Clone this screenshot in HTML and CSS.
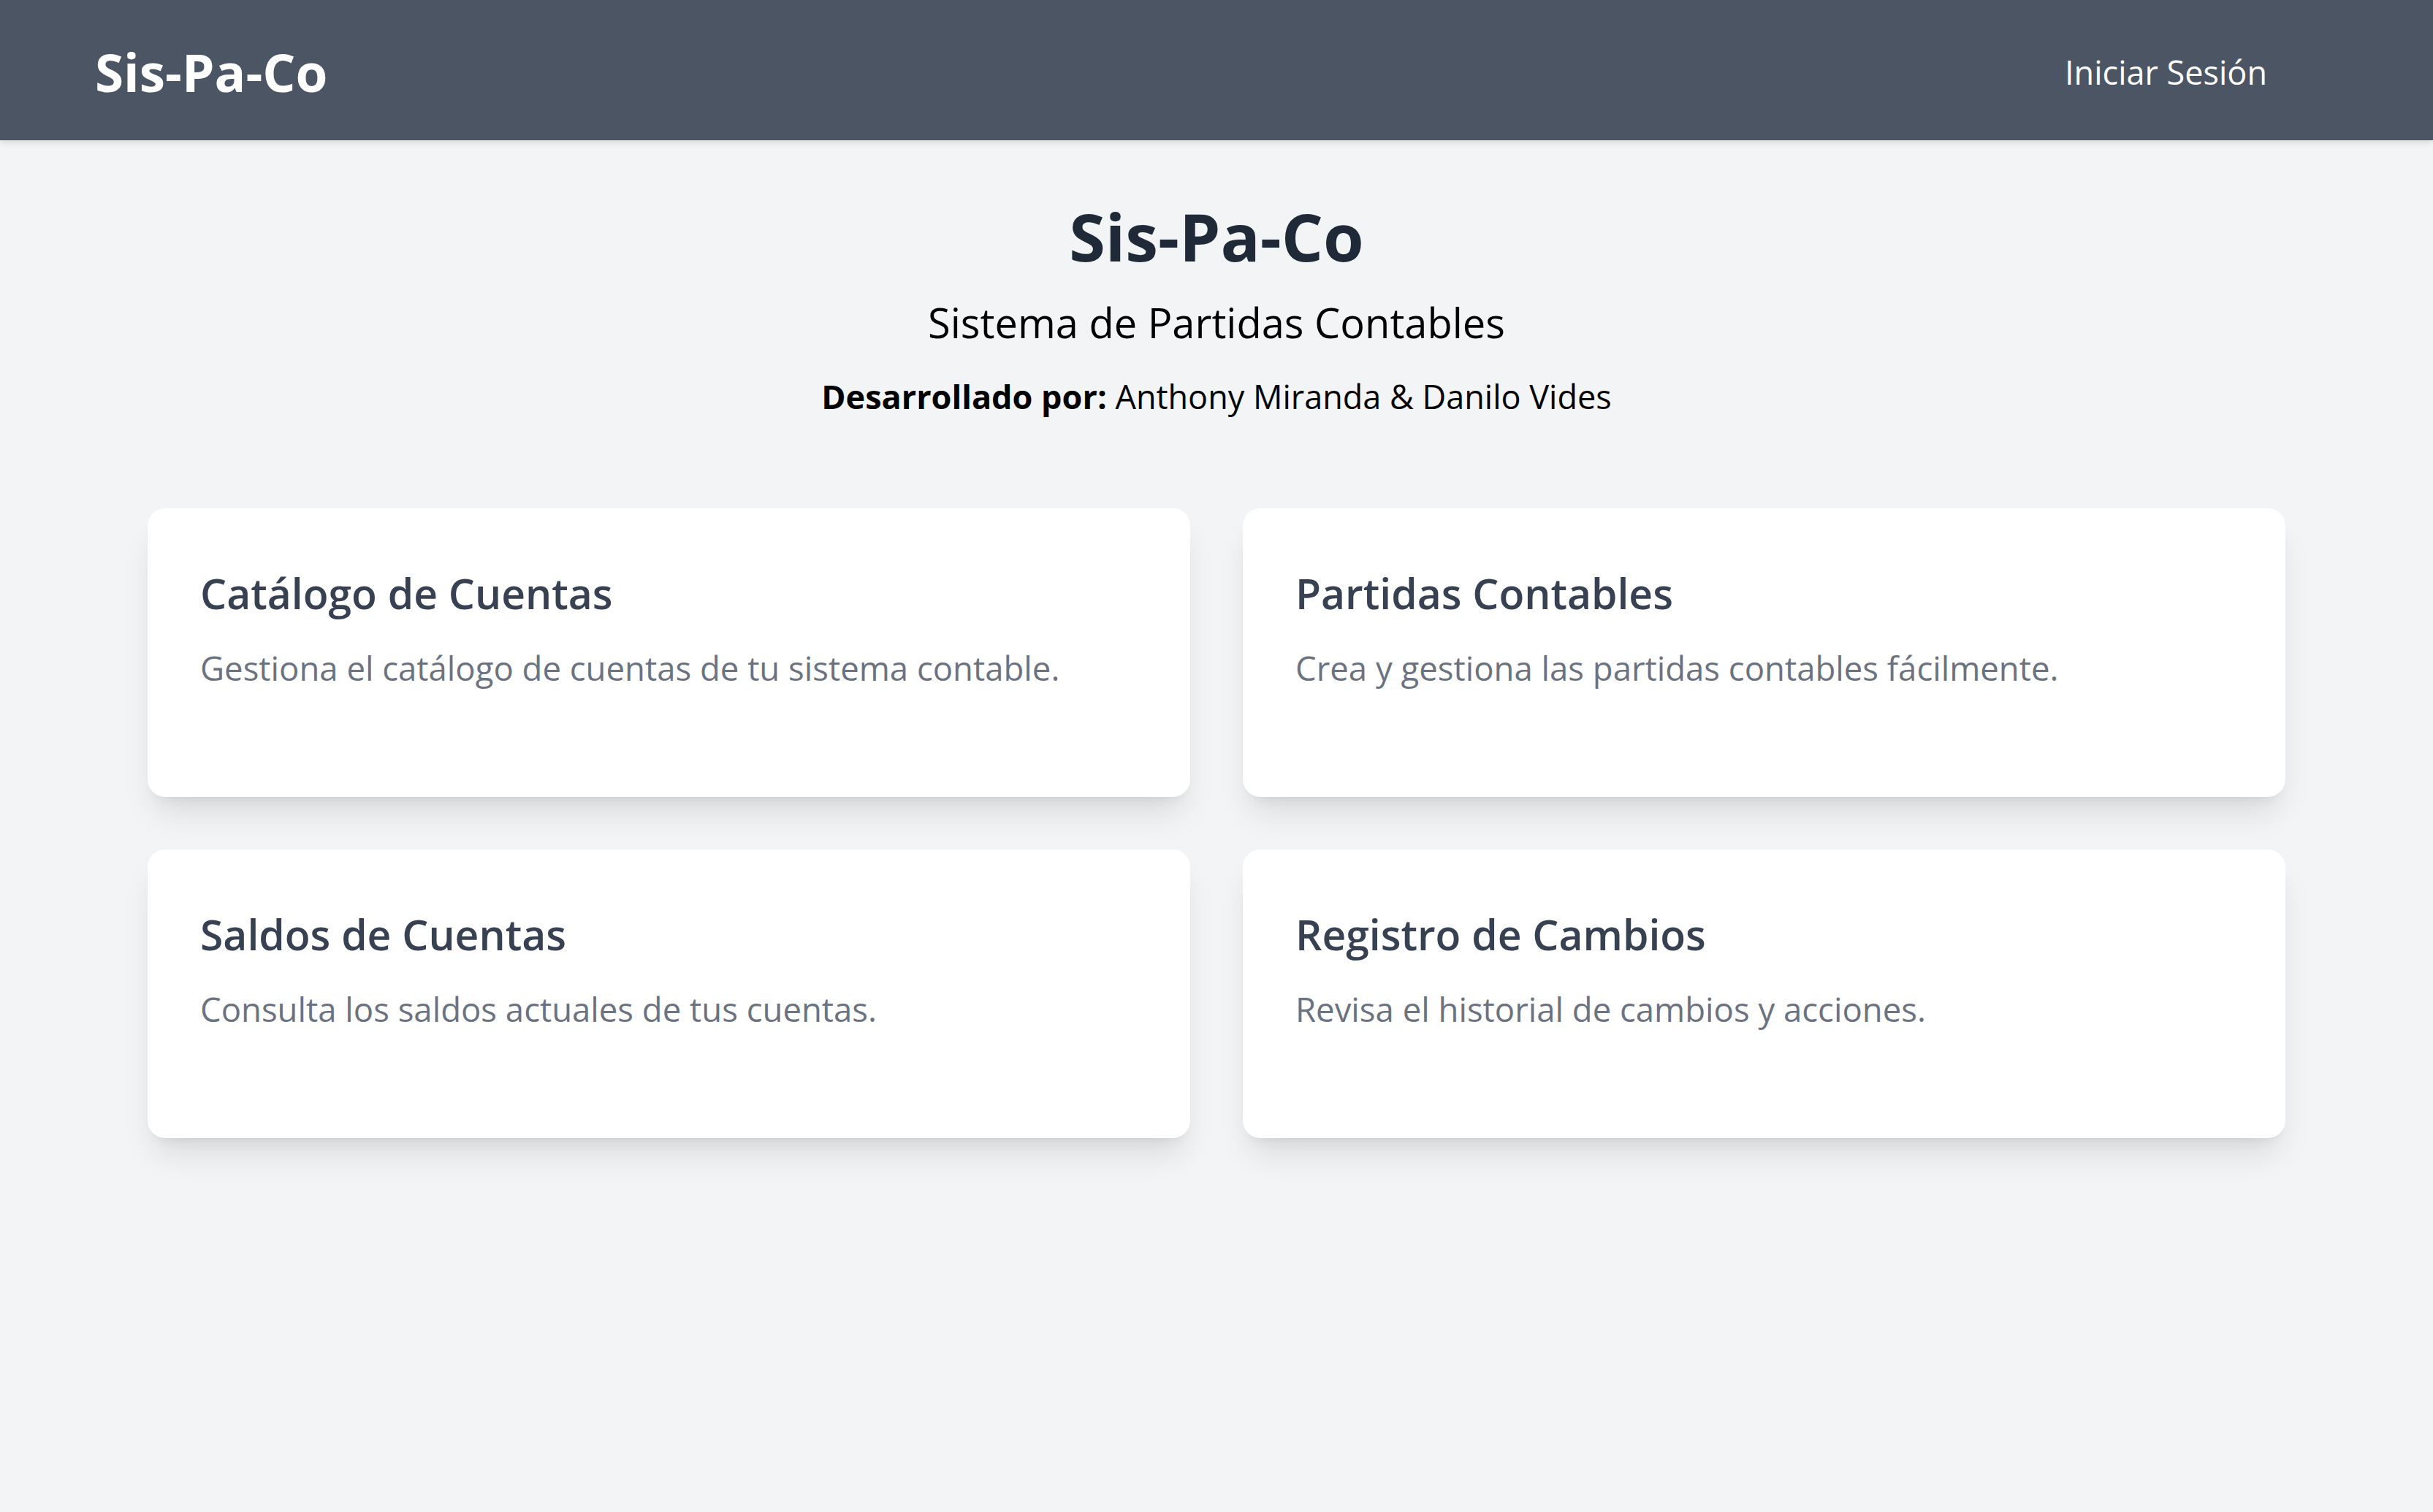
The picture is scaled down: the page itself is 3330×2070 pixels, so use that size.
FILE: index.html
```html
<!DOCTYPE html>
<html lang="es">
<head>
<meta charset="utf-8">
<title>Sis-Pa-Co</title>
<link rel="stylesheet" href="styles.css">
</head>
<body>
<header class="topbar">
  <div class="container bar">
    <div class="logo">Sis-Pa-Co</div>
    <a class="login" href="#">Iniciar Sesión</a>
  </div>
</header>
<main class="container main">
  <section class="hero">
    <h1 class="title">Sis-Pa-Co</h1>
    <p class="subtitle">Sistema de Partidas Contables</p>
    <p class="devs"><strong>Desarrollado por:</strong> Anthony Miranda &amp; Danilo Vides</p>
  </section>
  <section class="grid">
    <a class="card" href="#">
      <h2 class="card-title">Catálogo de Cuentas</h2>
      <p class="card-text">Gestiona el catálogo de cuentas de tu sistema contable.</p>
    </a>
    <a class="card" href="#">
      <h2 class="card-title">Partidas Contables</h2>
      <p class="card-text">Crea y gestiona las partidas contables fácilmente.</p>
    </a>
    <a class="card" href="#">
      <h2 class="card-title">Saldos de Cuentas</h2>
      <p class="card-text">Consulta los saldos actuales de tus cuentas.</p>
    </a>
    <a class="card" href="#">
      <h2 class="card-title">Registro de Cambios</h2>
      <p class="card-text">Revisa el historial de cambios y acciones.</p>
    </a>
  </section>
</main>
</body>
</html>
```

FILE: styles.css
```css
* { box-sizing: border-box; }
html, body {
  margin: 0;
  padding: 0;
}
body {
  background: #F3F4F6;
  font-family: "Segoe UI", "Open Sans", "Noto Sans", sans-serif;
  color: #000;
  min-height: 2070px;
}
.container {
  width: 3072px;
  margin: 0 auto;
}
.topbar {
  background: #4B5563;
  height: 192px;
  box-shadow: 0 3px 9px rgba(0,0,0,0.12);
}
.bar {
  height: 192px;
  padding-top: 6px;
  display: flex;
  align-items: center;
  justify-content: space-between;
}
.logo {
  color: #fff;
  font-weight: 700;
  font-size: 71px;
  line-height: 96px;
  padding-left: 1px;
}
.login {
  color: #fff;
  text-decoration: none;
  font-size: 45px;
  line-height: 72px;
  margin-right: 98px;
}
.main {
  padding: 77px 73px 72px;
}
.hero {
  text-align: center;
}
.title {
  margin: 0;
  font-size: 90px;
  font-weight: 700;
  line-height: 108px;
  color: #1F2937;
}
.subtitle {
  margin: 22px 0 0;
  font-size: 56px;
  line-height: 84px;
  color: #000;
}
.devs {
  margin: 24px 0 0;
  font-size: 45px;
  line-height: 72px;
  color: #000;
}
.devs strong { font-weight: 700; }
.grid {
  margin-top: 117px;
  display: grid;
  grid-template-columns: 1fr 1fr;
  gap: 72px;
}
.card {
  display: block;
  background: #fff;
  border-radius: 24px;
  padding: 74px 72px 72px;
  min-height: 395px;
  text-decoration: none;
  box-shadow: 0 30px 45px -9px rgba(0,0,0,0.1), 0 12px 18px -12px rgba(0,0,0,0.1);
}
.card-title {
  margin: 0;
  font-size: 57px;
  line-height: 84px;
  font-weight: 600;
  color: #374151;
}
.card-text {
  margin: 24px 0 0;
  font-size: 45.5px;
  line-height: 72px;
  color: #6B7280;
}
```
